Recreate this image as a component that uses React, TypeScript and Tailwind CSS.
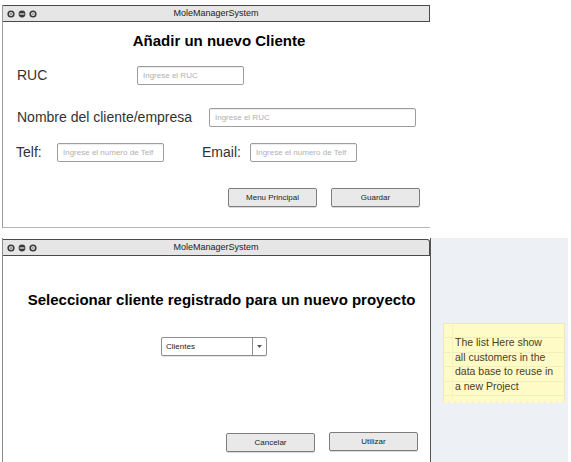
import React from 'react';

const font = "font-['Liberation_Sans',Arial,sans-serif]";

function WindowDots() {
  return (
    <svg width="34" height="8" viewBox="0 0 34 8" className="ml-[4px]">
      <circle cx="4" cy="4" r="2.8" fill="none" stroke="#3a3a3a" strokeWidth="1.6" />
      <circle cx="4" cy="4" r="0.8" fill="#3a3a3a" />
      <circle cx="15" cy="4" r="3.4" fill="#3a3a3a" />
      <rect x="12.6" y="3.4" width="4.8" height="1.2" fill="#e6e6e6" />
      <circle cx="26" cy="4" r="2.8" fill="none" stroke="#3a3a3a" strokeWidth="1.6" />
      <circle cx="26" cy="4" r="1" fill="#9a9a9a" />
    </svg>
  );
}

function TitleBar({ rounded = false }: { rounded?: boolean }) {
  return (
    <div
      className={`relative h-[17px] bg-[#e6e6e6] border-t border-b border-r border-[#4a4a4a] flex items-center ${
        rounded ? 'rounded-tr-[3px]' : ''
      }`}
    >
      <WindowDots />
      <span className="absolute inset-0 flex items-center justify-center text-[9px] text-[#222]">
        MoleManagerSystem
      </span>
    </div>
  );
}

function Field({ placeholder, width }: { placeholder: string; width: string }) {
  return (
    <div
      className={`${width} h-[19px] border border-[#9d9d9d] rounded-[2px] bg-white flex items-center pl-[5px] text-[8px] text-[#b0b0b0] shadow-[inset_0_1px_1px_rgba(0,0,0,0.08)]`}
    >
      {placeholder}
    </div>
  );
}

function Btn({ label }: { label: string }) {
  return (
    <div className="w-[89px] h-[19px] bg-[#e9e9e9] border border-[#7d7d7d] rounded-[2px] flex items-center justify-center text-[8px] text-[#222] shadow-[0_1px_0_rgba(0,0,0,0.15)]">
      {label}
    </div>
  );
}

export default function App() {
  return (
    <div className={`w-[571px] h-[462px] bg-white overflow-hidden ${font}`}>
      {/* --- VENTANA 1: NUEVO CLIENTE --- */}
      <div className="ml-[2px] mt-[5px] w-[428px] h-[223px] border-l border-b border-l-[#9a9a9a] border-b-[#b5b5b5] flex flex-col">
        <TitleBar />
        <div className="flex flex-col text-[#333]">
          <h1 className="mt-[9px] pl-[5px] text-center text-[15px] leading-[20px] font-bold text-black">
            Añadir un nuevo Cliente
          </h1>

          <div className="mt-[15px] pl-[14px] flex items-center">
            <span className="w-[120px] text-[14px] leading-[19px]">RUC</span>
            <Field placeholder="Ingrese el RUC" width="w-[107px]" />
          </div>

          <div className="mt-[23px] pl-[14px] flex items-center">
            <span className="w-[192px] text-[14px] leading-[19px]">Nombre del cliente/empresa</span>
            <Field placeholder="Ingrese el RUC" width="w-[207px]" />
          </div>

          <div className="mt-[16px] pl-[13px] flex items-center">
            <span className="w-[41px] text-[14px] leading-[19px]">Telf:</span>
            <Field placeholder="Ingrese el numero de Telf" width="w-[107px]" />
            <span className="ml-[38px] w-[48px] text-[14px] leading-[19px]">Email:</span>
            <Field placeholder="Ingrese el numero de Telf" width="w-[107px]" />
          </div>

          <div className="mt-[26px] pr-[10px] flex justify-end gap-[14px]">
            <Btn label="Menu Principal" />
            <Btn label="Guardar" />
          </div>
        </div>
      </div>

      {/* --- VENTANA 2: SELECCIONAR CLIENTE --- */}
      <div className="mt-[10px] flex h-[224px]">
        <div className="ml-[2px] w-[429px] border-l border-r border-l-[#8a8a8a] border-r-[#555] flex flex-col">
          <div className="mt-px">
            <TitleBar rounded />
          </div>
          <h2 className="mt-[34px] pl-[10px] text-center text-[15px] leading-[20px] font-bold text-black">
            Seleccionar cliente registrado para un nuevo proyecto
          </h2>

          <div className="mt-[27px] ml-[158px] w-[106px] h-[19px] border border-[#8d8d8d] rounded-[2px] flex items-stretch bg-white shadow-[0_1px_0_rgba(0,0,0,0.1)]">
            <span className="flex-1 flex items-center pl-[4px] text-[8px] text-[#222]">Clientes</span>
            <span className="w-[14px] border-l border-[#8d8d8d] flex items-center justify-center">
              <svg width="5" height="3" viewBox="0 0 5 3">
                <path d="M0 0 L5 0 L2.5 3 Z" fill="#555" />
              </svg>
            </span>
          </div>

          <div className="mt-[76px] pr-[12px] flex justify-end items-start gap-[14px]">
            <div className="mt-px">
              <Btn label="Cancelar" />
            </div>
            <Btn label="Utilizar" />
          </div>
        </div>

        {/* --- PANEL DERECHO CON NOTA --- */}
        <div className="w-[137px] bg-[#edf0f5] pt-[85px] pl-[12px]">
          <div className="relative w-[122px] h-[79px]">
            <div className="absolute inset-0 border border-[#ebe8c4] bg-[#fefbc6] bg-[repeating-linear-gradient(to_bottom,transparent_0px,transparent_13.5px,#f3efba_13.5px,#f3efba_14.5px)] pt-[11px] pl-[11px] pr-[4px] text-[10.5px] leading-[14.5px] text-[#4d3d1f]">
              <div className="absolute top-0 bottom-0 left-[8px] w-px bg-[#f8f0c0]" />
              <p className="relative">
                The list Here show
                <br />
                all customers in the
                <br />
                data base to reuse in
                <br />
                a new Project
              </p>
            </div>
            <svg className="absolute left-0 bottom-[-3px]" width="122" height="4" viewBox="0 0 122 4">
              <path
                d="M0 0 L3 3 L6 0 L9 3 L12 0 L15 3 L18 0 L21 3 L24 0 L27 3 L30 0 L33 3 L36 0 L39 3 L42 0 L45 3 L48 0 L51 3 L54 0 L57 3 L60 0 L63 3 L66 0 L69 3 L72 0 L75 3 L78 0 L81 3 L84 0 L87 3 L90 0 L93 3 L96 0 L99 3 L102 0 L105 3 L108 0 L111 3 L114 0 L117 3 L120 0 L122 2 L122 0 Z"
                fill="#fefbc6"
              />
            </svg>
          </div>
        </div>
      </div>
    </div>
  );
}
